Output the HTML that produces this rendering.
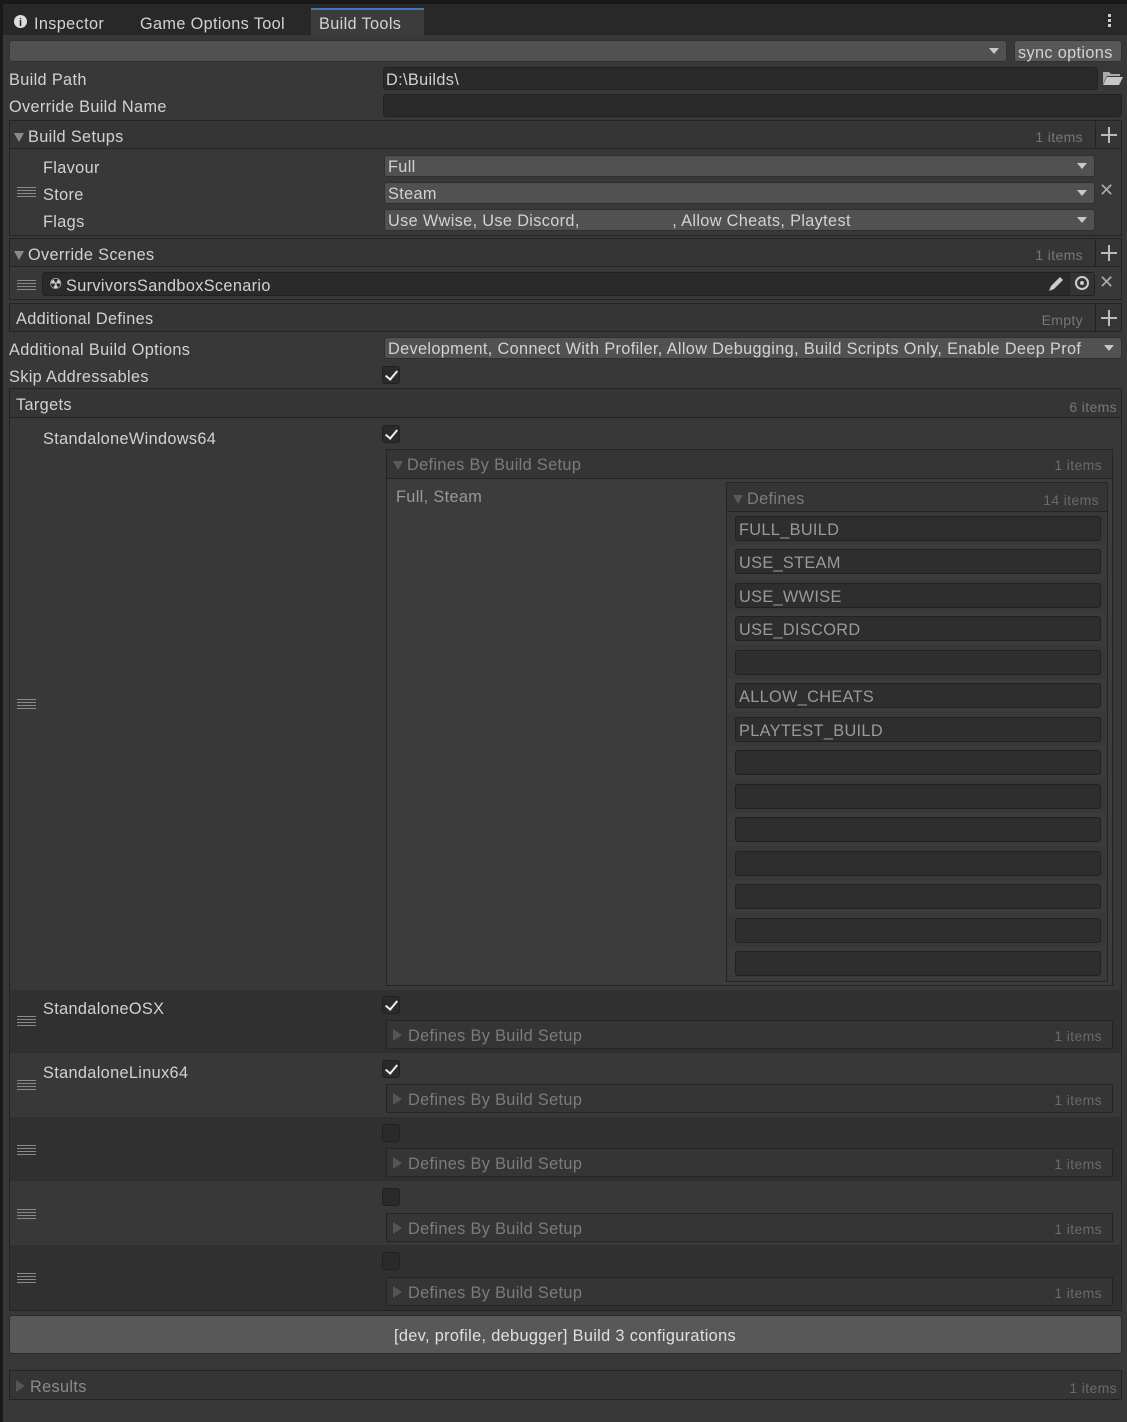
<!DOCTYPE html>
<html><head><meta charset="utf-8"><style>
*{box-sizing:border-box;margin:0;padding:0}
body{width:1127px;height:1422px;background:#383838;font-family:"Liberation Sans",sans-serif;font-size:16.3px;color:#d2d2d2;position:relative;overflow:hidden;letter-spacing:.35px}
.a{position:absolute}
.t{position:absolute;white-space:nowrap;line-height:20px;margin-top:2px}
.fld{position:absolute;background:#2a2a2a;border:1px solid #212121;border-radius:3px}
.dd{position:absolute;background:#515151;border:1px solid #303030;border-radius:3px;padding-left:3px;line-height:22px;white-space:nowrap;overflow:hidden}
.dd:after{content:"";position:absolute;right:7px;top:7px;border-left:5px solid transparent;border-right:5px solid transparent;border-top:6px solid #c8c8c8}
.hdr{position:absolute;background:#353535;border:1px solid #232323}
.cnt{position:absolute;right:10px;color:#777;font-size:14px}
.plus{position:absolute;width:26px;border-left:1px solid #232323;background:#353535}
.plus:before{content:"";position:absolute;left:5px;top:50%;width:16px;height:2px;margin-top:-1px;background:#bbb}
.plus:after{content:"";position:absolute;left:12px;top:50%;width:2px;height:16px;margin-top:-8px;background:#bbb}
.cb{position:absolute;width:18px;height:18px;background:#2a2a2a;border:1px solid #202020;border-radius:3px}
.cb.on:after{content:"";position:absolute;left:5px;top:1px;width:5px;height:10px;border-right:2px solid #eee;border-bottom:2px solid #eee;transform:rotate(40deg)}
.grip{position:absolute;width:19px;height:10px;background:repeating-linear-gradient(#8a8a8a 0 1px,transparent 1px 3px)}
.tri-d{display:inline-block;border-left:5px solid transparent;border-right:5px solid transparent;border-top:9px solid #8a8a8a;margin-right:4px}
.tri-r{position:absolute;border-top:6px solid transparent;border-bottom:6px solid transparent;border-left:9px solid #555}
.x{position:absolute;color:#aaa;font-size:18px}
.dbs{position:absolute;left:386px;width:727px;height:29px;background:#353535;border:1px solid #252525}
.dbs .lbl{position:absolute;white-space:nowrap;line-height:20px;color:#7c7c7c;left:21px;top:5px}
.dbs .num{position:absolute;white-space:nowrap;line-height:20px;right:10px;top:5px;color:#6a6a6a;font-size:14px}
.di{position:absolute;left:728px;width:378px;height:33px}
.di .fld{left:7px;right:5px;top:4px;height:25px;background:#2e2e2e}
.di .t{left:11px;top:6px;color:#9a9a9a}
</style></head><body>
<div class="a" style="left:0;top:0;width:1127px;height:4px;background:#191919"></div>
<div class="a" style="left:0;top:4px;width:1127px;height:31px;background:#282828"></div>
<div class="a" style="left:0;top:0;width:3px;height:1422px;background:#191919"></div>
<div class="a" style="left:14px;top:15px;width:13px;height:13px;border-radius:50%;background:#ddd"></div>
<div class="t" style="left:19px;top:11px;font-size:11px;color:#282828;font-weight:bold">i</div>
<div class="t" style="left:34px;top:12px">Inspector</div>
<div class="t" style="left:140px;top:12px">Game Options Tool</div>
<div class="a" style="left:311px;top:8px;width:113px;height:27px;background:#3c3c3c;border-top:2px solid #3a79bb"></div>
<div class="t" style="left:319px;top:12px">Build Tools</div>
<div class="a" style="left:1108px;top:14px;width:3px;height:3px;background:#ccc;box-shadow:0 5px 0 #ccc,0 10px 0 #ccc"></div>
<div class="dd" style="left:9px;top:40px;width:998px;height:22px"></div>
<div class="a" style="left:1014px;top:40px;width:108px;height:22px;background:#585858;border:1px solid #303030;border-radius:3px"></div>
<div class="t" style="left:1018px;top:41px">sync options</div>
<div class="t" style="left:9px;top:68px">Build Path</div>
<div class="fld" style="left:383px;top:67px;width:715px;height:23px"></div>
<div class="t" style="left:386px;top:68px">D:\Builds\</div>
<svg class="a" style="left:1102px;top:70px" width="21" height="16"><path d="M1 2h6l2 2h9v2H5L1 14z" fill="#aaa"/><path d="M5 7h16l-4 8H1z" fill="#c8c8c8"/></svg>
<div class="t" style="left:9px;top:95px">Override Build Name</div>
<div class="fld" style="left:383px;top:94px;width:739px;height:23px"></div>
<div class="hdr" style="left:9px;top:120px;width:1113px;height:29px"></div>
<div class="t" style="left:14px;top:125px"><span class="tri-d"></span>Build Setups</div>
<div class="cnt t" style="right:44px;top:125px">1 items</div>
<div class="plus" style="left:1095px;top:121px;height:27px"></div>
<div class="a" style="left:9px;top:149px;width:1113px;height:87px;background:#383838;border:1px solid #232323;border-top:none"></div>
<div class="t" style="left:43px;top:156px">Flavour</div>
<div class="t" style="left:43px;top:183px">Store</div>
<div class="t" style="left:43px;top:210px">Flags</div>
<div class="grip" style="left:17px;top:187px"></div>
<div class="dd" style="left:384px;top:155px;width:711px;height:22px">Full</div>
<div class="dd" style="left:384px;top:182px;width:711px;height:22px">Steam</div>
<div class="dd" style="left:384px;top:209px;width:711px;height:22px">Use Wwise, Use Discord, &nbsp; &nbsp; &nbsp; &nbsp; &nbsp; &nbsp; &nbsp; &nbsp; &nbsp; , Allow Cheats, Playtest</div>
<div class="x" style="left:1099px;top:180px">✕</div>
<div class="hdr" style="left:9px;top:238px;width:1113px;height:29px"></div>
<div class="t" style="left:14px;top:243px"><span class="tri-d"></span>Override Scenes</div>
<div class="cnt t" style="right:44px;top:243px">1 items</div>
<div class="plus" style="left:1095px;top:239px;height:27px"></div>
<div class="a" style="left:9px;top:267px;width:1113px;height:33px;background:#383838;border:1px solid #232323;border-top:none"></div>
<div class="grip" style="left:17px;top:280px"></div>
<div class="fld" style="left:42px;top:272px;width:1053px;height:24px"></div>
<div class="t" style="left:49px;top:273px;font-size:15px">☢</div>
<div class="t" style="left:66px;top:274px">SurvivorsSandboxScenario</div>
<svg class="a" style="left:1047px;top:275px" width="18" height="18"><path d="M2 16l2-5 9-9 3 3-9 9z" fill="#ccc"/></svg>
<div class="a" style="left:1070px;top:273px;width:24px;height:22px;background:#333"></div>
<div class="a" style="left:1075px;top:276px;width:14px;height:14px;border:2px solid #ccc;border-radius:50%"></div>
<div class="a" style="left:1080px;top:281px;width:4px;height:4px;background:#ccc;border-radius:50%"></div>
<div class="x" style="left:1099px;top:272px">✕</div>
<div class="hdr" style="left:9px;top:303px;width:1113px;height:29px"></div>
<div class="t" style="left:16px;top:307px">Additional Defines</div>
<div class="cnt t" style="right:44px;top:308px">Empty</div>
<div class="plus" style="left:1095px;top:304px;height:27px"></div>
<div class="t" style="left:9px;top:338px">Additional Build Options</div>
<div class="dd" style="left:384px;top:337px;width:738px;height:22px;padding-right:20px">Development, Connect With Profiler, Allow Debugging, Build Scripts Only, Enable Deep Prof</div>
<div class="t" style="left:9px;top:365px">Skip Addressables</div>
<div class="cb on" style="left:382px;top:366px"></div>
<div class="hdr" style="left:9px;top:388px;width:1113px;height:30px"></div>
<div class="t" style="left:16px;top:393px">Targets</div>
<div class="cnt t" style="top:395px">6 items</div>
<div class="a" style="left:9px;top:418px;width:1113px;height:893px;border:1px solid #232323;border-top:none"></div>
<div class="a" style="left:10px;top:418px;width:1111px;height:572px;background:#383838"></div>
<div class="a" style="left:10px;top:990px;width:1111px;height:63px;background:#303030"></div>
<div class="a" style="left:10px;top:1053px;width:1111px;height:64px;background:#383838"></div>
<div class="a" style="left:10px;top:1117px;width:1111px;height:64px;background:#303030"></div>
<div class="a" style="left:10px;top:1181px;width:1111px;height:64px;background:#383838"></div>
<div class="a" style="left:10px;top:1245px;width:1111px;height:65px;background:#303030"></div>
<div class="grip" style="left:17px;top:699px"></div>
<div class="grip" style="left:17px;top:1016px"></div>
<div class="grip" style="left:17px;top:1080px"></div>
<div class="grip" style="left:17px;top:1145px"></div>
<div class="grip" style="left:17px;top:1209px"></div>
<div class="grip" style="left:17px;top:1273px"></div>
<div class="t" style="left:43px;top:427px">StandaloneWindows64</div>
<div class="t" style="left:43px;top:997px">StandaloneOSX</div>
<div class="t" style="left:43px;top:1061px">StandaloneLinux64</div>
<div class="cb on" style="left:382px;top:425px"></div>
<div class="cb on" style="left:382px;top:996px"></div>
<div class="cb on" style="left:382px;top:1060px"></div>
<div class="cb" style="left:382px;top:1124px"></div>
<div class="cb" style="left:382px;top:1188px"></div>
<div class="cb" style="left:382px;top:1252px"></div>
<div class="dbs" style="top:449px;height:30px"><div class="lbl" style="left:6px"><span class="tri-d" style="border-top-color:#5a5a5a"></span>Defines By Build Setup</div><div class="num">1 items</div></div>
<div class="a" style="left:386px;top:479px;width:727px;height:507px;background:#3c3c3c;border:1px solid #252525;border-top:none"></div>
<div class="t" style="left:396px;top:485px;color:#999">Full, Steam</div>
<div class="a" style="left:726px;top:482px;width:382px;height:500px;border:1px solid #262626;background:#383838"></div>
<div class="a" style="left:727px;top:483px;width:380px;height:29px;background:#353535;border-bottom:1px solid #252525"></div>
<div class="t" style="left:733px;top:487px;color:#7c7c7c"><span class="tri-d" style="border-top-color:#5a5a5a"></span>Defines</div>
<div class="cnt t" style="right:28px;top:488px;color:#6a6a6a">14 items</div>
<div class="di" style="top:512px;background:#383838"><div class="fld"></div><div class="t">FULL_BUILD</div></div>
<div class="di" style="top:545px;background:#3b3b3b"><div class="fld"></div><div class="t">USE_STEAM</div></div>
<div class="di" style="top:579px;background:#383838"><div class="fld"></div><div class="t">USE_WWISE</div></div>
<div class="di" style="top:612px;background:#3b3b3b"><div class="fld"></div><div class="t">USE_DISCORD</div></div>
<div class="di" style="top:646px;background:#383838"><div class="fld"></div></div>
<div class="di" style="top:679px;background:#3b3b3b"><div class="fld"></div><div class="t">ALLOW_CHEATS</div></div>
<div class="di" style="top:713px;background:#383838"><div class="fld"></div><div class="t">PLAYTEST_BUILD</div></div>
<div class="di" style="top:746px;background:#3b3b3b"><div class="fld"></div></div>
<div class="di" style="top:780px;background:#383838"><div class="fld"></div></div>
<div class="di" style="top:813px;background:#3b3b3b"><div class="fld"></div></div>
<div class="di" style="top:847px;background:#383838"><div class="fld"></div></div>
<div class="di" style="top:880px;background:#3b3b3b"><div class="fld"></div></div>
<div class="di" style="top:914px;background:#383838"><div class="fld"></div></div>
<div class="di" style="top:947px;background:#3b3b3b"><div class="fld"></div></div>
<div class="dbs" style="top:1020px"><div class="tri-r" style="left:6px;top:8px"></div><div class="lbl">Defines By Build Setup</div><div class="num">1 items</div></div>
<div class="dbs" style="top:1084px"><div class="tri-r" style="left:6px;top:8px"></div><div class="lbl">Defines By Build Setup</div><div class="num">1 items</div></div>
<div class="dbs" style="top:1148px"><div class="tri-r" style="left:6px;top:8px"></div><div class="lbl">Defines By Build Setup</div><div class="num">1 items</div></div>
<div class="dbs" style="top:1213px"><div class="tri-r" style="left:6px;top:8px"></div><div class="lbl">Defines By Build Setup</div><div class="num">1 items</div></div>
<div class="dbs" style="top:1277px"><div class="tri-r" style="left:6px;top:8px"></div><div class="lbl">Defines By Build Setup</div><div class="num">1 items</div></div>
<div class="a" style="left:9px;top:1315px;width:1113px;height:39px;background:#585858;border:1px solid #2a2a2a;border-radius:3px"></div>
<div class="t" style="left:0;width:1130px;text-align:center;top:1324px;color:#e0e0e0">[dev, profile, debugger] Build 3 configurations</div>
<div class="hdr" style="left:9px;top:1370px;width:1113px;height:30px"></div>
<div class="tri-r" style="left:16px;top:1380px"></div>
<div class="t" style="left:30px;top:1375px;color:#8a8a8a">Results</div>
<div class="cnt t" style="top:1376px;color:#6a6a6a">1 items</div>
</body></html>
